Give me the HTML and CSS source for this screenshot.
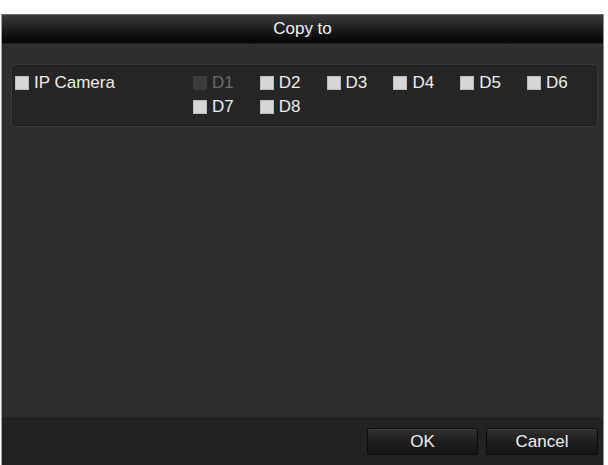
FILE: index.html
```html
<!DOCTYPE html>
<html>
<head>
<meta charset="utf-8">
<link rel="stylesheet" href="styles.css">
</head>
<body>
<div class="dialog">
  <div class="titlebar">Copy to</div>
  <div class="content">
    <div class="group">
      <div class="group-label">
        <div class="opt"><span class="box"></span><span class="txt">IP Camera</span></div>
      </div>
      <div class="channels">
        <div class="opt disabled"><span class="box"></span><span class="txt">D1</span></div>
        <div class="opt"><span class="box"></span><span class="txt">D2</span></div>
        <div class="opt"><span class="box"></span><span class="txt">D3</span></div>
        <div class="opt"><span class="box"></span><span class="txt">D4</span></div>
        <div class="opt"><span class="box"></span><span class="txt">D5</span></div>
        <div class="opt"><span class="box"></span><span class="txt">D6</span></div>
        <div class="opt"><span class="box"></span><span class="txt">D7</span></div>
        <div class="opt"><span class="box"></span><span class="txt">D8</span></div>
      </div>
    </div>
  </div>
  <div class="footer">
    <button class="btn">OK</button>
    <button class="btn">Cancel</button>
  </div>
</div>
</body>
</html>
```
FILE: styles.css
```css
html, body {
  margin: 0;
  padding: 0;
  background: #ffffff;
}
body {
  padding-top: 14px;
  padding-left: 1px;
  font-family: "Liberation Sans", Arial, sans-serif;
  font-size: 17px;
  color: #eeeeee;
}
.dialog {
  width: 601px;
  height: 451px;
  border-left: 1px solid #9c9c9c;
  border-right: 1px solid #8c8c8c;
  background: #2d2d2d;
  display: flex;
  flex-direction: column;
  overflow: hidden;
}
.titlebar {
  height: 28px;
  border-top: 1px solid #6a6a6a;
  background: linear-gradient(to bottom, #3a3a3a 0%, #262626 35%, #0c0c0c 80%, #070707 100%);
  border-bottom: 1px solid #1b1b1b;
  text-align: center;
  line-height: 28px;
  color: #f2f2f2;
  flex: none;
}
.content {
  flex: 1;
  padding: 19px 5px 0 9px;
  border-top: 1px solid #323232;
}
.group {
  height: 61px;
  border: 1px solid #3a3a3a;
  border-radius: 5px;
  background: #252525;
  padding: 6px 0 0 3px;
  box-sizing: border-box;
  height: 63px;
  display: flex;
  box-shadow: inset 0 0 2px rgba(0,0,0,0.6);
}
.group-label {
  width: 178px;
  flex: none;
}
.channels {
  display: grid;
  grid-template-columns: repeat(6, 66.8px);
  grid-auto-rows: 24px;
}
.opt {
  display: flex;
  align-items: center;
  height: 24px;
  white-space: nowrap;
}
.box {
  width: 14px;
  height: 14px;
  background: #d6d6d6;
  box-shadow: inset 0 0 0 1px #bcbcbc;
  margin-right: 5px;
  flex: none;
}
.txt {
  line-height: 24px;
}
.disabled .box {
  background: #3c3c3c;
  box-shadow: none;
}
.disabled .txt {
  color: #6c6c6c;
}
.footer {
  height: 37px;
  flex: none;
  background: #222222;
  border-top: 1px solid #272727;
  padding: 10px 5px 0 0;
  display: flex;
  justify-content: flex-end;
  gap: 8px;
}
.btn {
  width: 111px;
  height: 27px;
  border: 1px solid #0b0b0b;
  border-radius: 2px;
  background: linear-gradient(to bottom, #303030 0%, #1f1f1f 50%, #141414 100%);
  box-shadow: inset 0 1px 0 #3c3c3c;
  color: #f0f0f0;
  font-family: "Liberation Sans", Arial, sans-serif;
  font-size: 17px;
  padding: 0;
}
.btn + .btn {
  width: 112px;
}
```
